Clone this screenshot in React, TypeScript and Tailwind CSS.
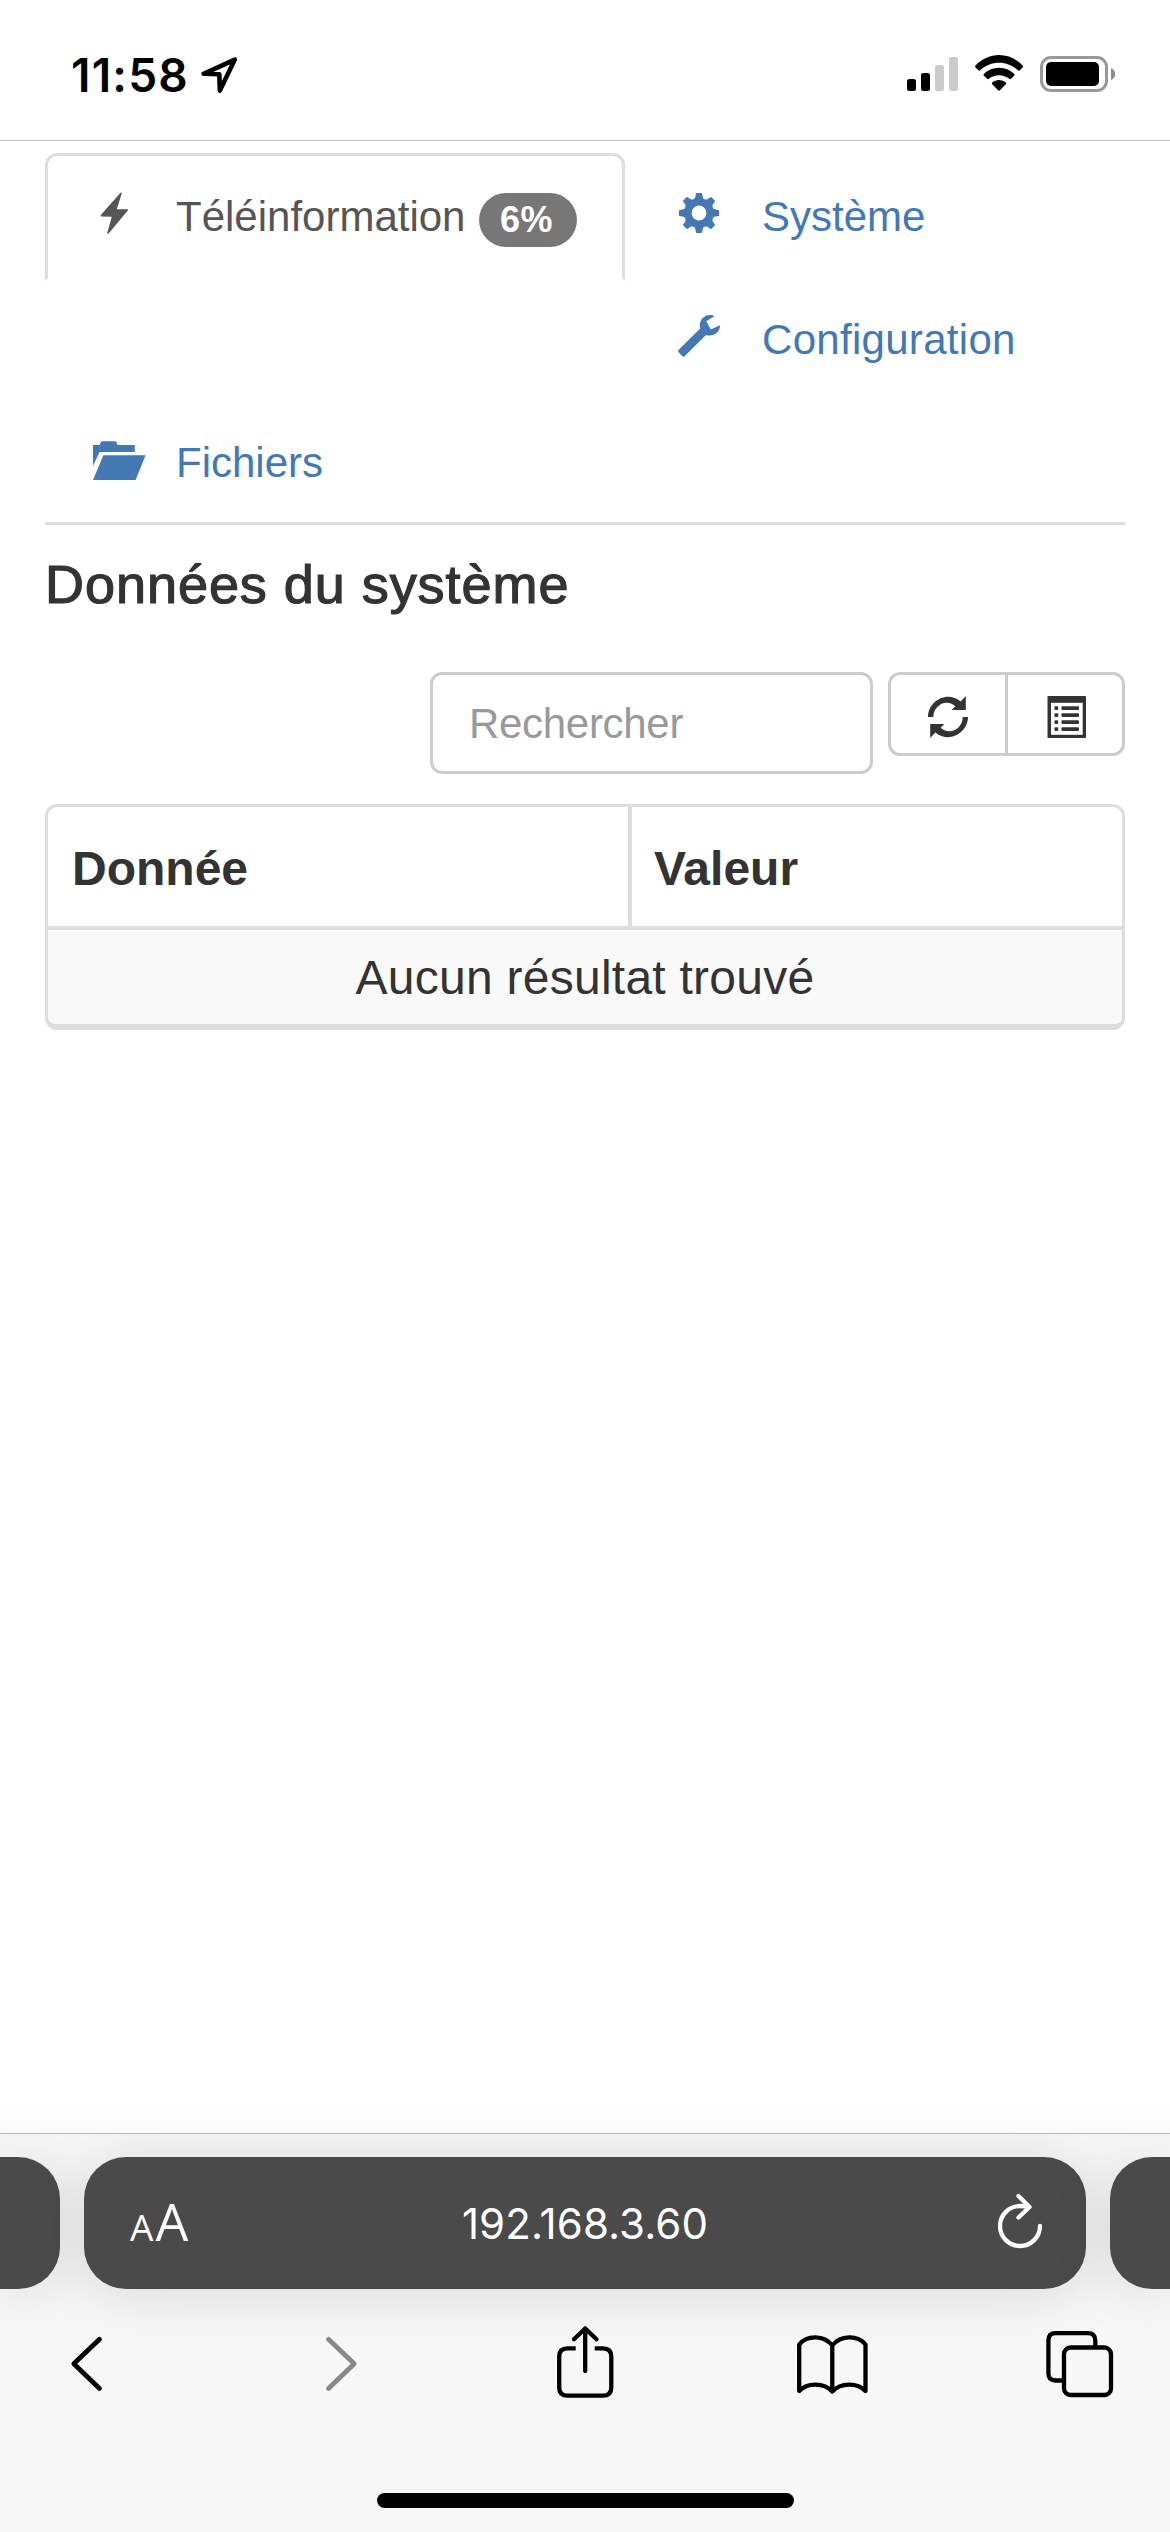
import type { ReactNode } from "react";

interface NavTabProps {
  icon: ReactNode;
  label: string;
  className?: string;
}

const GEAR_TEETH = [0, 45, 90, 135, 180, 225, 270, 315];
const LIST_ROWS = [10.3, 17.3, 24.3, 31.3];
const REFRESH_ARROW =
  "M0 21C0 5.5 19 -6 32.6 5.6L37.8 0V14H23.6L27.4 10.2C18 1.8 5.3 9.5 5.3 21Z";

function BoltIcon() {
  return (
    <path d="M27.3 6.9Q29 6 28.7 7.5L23.8 23.2L34.3 23.2Q35.6 23.4 34.8 24.6L15.6 47.4Q14 48.6 14.3 46.8L18.8 30.8L8.4 30.4Q7.2 30 8 28.8Z" />
  );
}

function GearIcon() {
  return (
    <g transform="translate(20 27)">
      <circle r="11.1" fill="none" stroke="currentColor" strokeWidth="7.4" />
      {GEAR_TEETH.map((angle) => (
        <path
          key={angle}
          d="M-2.4 -20H2.4Q3 -20 3.1 -19.3L3.8 -15.5L5.5 -13H-5.5L-3.8 -15.5L-3.1 -19.3Q-3 -20 -2.4 -20Z"
          transform={`rotate(${angle})`}
        />
      ))}
    </g>
  );
}

function WrenchIcon() {
  return (
    <path d="M-0.4 43.2Q-1.4 42 -0.3 40.8L21.2 19.6C19.2 12.4 24 6 31.5 6Q34 6.1 35.4 7.2L27.3 12.3L31.8 20.4L41 16.3C41.4 23 34 28.4 27 26L5.6 47.2Q4.4 48.3 3.2 47.1Z" />
  );
}

function FolderIcon() {
  return (
    <>
      <path d="M0 13H6.8L7.6 10.5Q8 9.3 9.3 9.3H22Q23.2 9.3 23.6 10.5L24.4 13H41.8V20H6.6L0 34Z" />
      <path d="M10.4 23.3H52.6L42.6 48H0Z" />
    </>
  );
}

function NavTab({ icon, label, className = "" }: NavTabProps) {
  return (
    <a className={`flex items-start pl-[48px] pt-[33px] text-[#4478b5] ${className}`}>
      <svg
        className="w-[83px] h-[60px] shrink-0 overflow-visible"
        viewBox="0 0 83 60"
        fill="currentColor"
      >
        {icon}
      </svg>
      <span className="mt-px">{label}</span>
    </a>
  );
}

function StatusBar() {
  return (
    <header className="flex h-[141px] shrink-0 items-start border-b border-[#bfbfbf] pl-[71px] pr-[54px] pt-[55px]">
      <span className="w-[130px] font-['Inter'] text-[46px] leading-[40px] font-semibold tracking-[1.2px] text-black">
        11:58
      </span>
      <svg
        className="mt-[2px] w-[37px] h-[37px]"
        viewBox="0 0 37 37"
        fill="none"
        stroke="#000"
        strokeWidth="4.6"
        strokeLinejoin="round"
      >
        <path d="M2.6 16.8L33.8 2.6L18.9 33.6L18.3 17.2Z" />
      </svg>
      <svg className="ml-auto w-[209px] h-[38px]" viewBox="907 55 209 38">
        {/* Signal */}
        <rect x="907" y="79" width="9" height="12" rx="2.5" />
        <rect x="921" y="73" width="9" height="18" rx="2.5" />
        <rect x="935" y="65" width="9" height="26" rx="2.5" fill="#cbcbcb" />
        <rect x="949" y="57" width="9" height="34" rx="2.5" fill="#cbcbcb" />
        {/* Wifi */}
        <g transform="translate(975 55)">
          <path d="M0.5 10.6C13.5 -3.5 34.5 -3.5 47.7 10.6Q48.6 11.5 47.8 12.3L44.5 15.4Q43.7 16 42.9 15.3C32.5 5.2 15.5 5.2 5.2 15.3Q4.4 16 3.6 15.4L0.4 12.3Q-0.4 11.5 0.5 10.6Z" />
          <path d="M8.8 19C17 10.6 31 10.6 39.3 19Q40 19.8 39.3 20.6L36 23.8Q35.2 24.5 34.3 23.8C28.5 18.9 19.5 18.9 13.8 23.8Q12.9 24.5 12.1 23.8L8.8 20.6Q8.1 19.8 8.8 19Z" />
          <path d="M17.2 27.6C21 24.2 27 24.2 30.8 27.6Q31.6 28.5 30.8 29.3L24.9 35.3Q24 36.1 23.1 35.3L17.2 29.3Q16.4 28.5 17.2 27.6Z" />
        </g>
        {/* Battery */}
        <rect x="1041.5" y="57.5" width="65" height="33" rx="9.5" fill="none" stroke="#999" strokeWidth="3" />
        <rect x="1046" y="62" width="53" height="24" rx="5" />
        <path d="M1111 68Q1115.2 70 1115.2 74Q1115.2 78 1111 80Z" fill="#8c8c8c" />
      </svg>
    </header>
  );
}

function NavTabs() {
  return (
    <nav className="mt-[12px] grid h-[372px] grid-cols-[586px_1fr] grid-rows-3 border-b-[3px] border-[#ddd] text-[42px] leading-[60px]">
      <a className="flex h-[128px] w-[580px] items-start rounded-t-[12px] border-[3px] border-[#ddd] border-b-transparent pl-[45px] pt-[30px] text-[#555]">
        <svg className="w-[83px] h-[60px] shrink-0" viewBox="0 0 83 60" fill="currentColor">
          <BoltIcon />
        </svg>
        <span className="mt-px">Téléinformation</span>
        <span className="ml-[14px] mt-[7px] flex h-[54px] w-[98px] items-center justify-center rounded-[27px] bg-[#777] pr-[4px] text-[36px] leading-[36px] font-bold tracking-[0.4px] text-white">
          6%
        </span>
      </a>
      <NavTab icon={<GearIcon />} label="Système" />
      <NavTab
        icon={<WrenchIcon />}
        label="Configuration"
        className="col-start-2 tracking-[0.3px]"
      />
      <NavTab icon={<FolderIcon />} label="Fichiers" className="col-start-1" />
    </nav>
  );
}

function Toolbar() {
  return (
    <div className="mt-[58px] flex items-start justify-end">
      <input
        type="text"
        placeholder="Rechercher"
        className="h-[102px] w-[443px] rounded-[12px] border-[3px] border-[#ccc] bg-white px-[36px] pt-[2px] text-[42px] tracking-[-0.3px] placeholder:text-[#999]"
      />
      <div className="ml-[15px] flex h-[84px] w-[237px] rounded-[12px] border-[3px] border-[#ccc] text-[#333]">
        <button type="button" className="w-[117px] border-r-[3px] border-[#ccc] pl-[37px] pt-[6px]">
          <svg className="w-[40px] h-[42px]" viewBox="0 0 40 42" fill="currentColor">
            <path d={REFRESH_ARROW} />
            <path d={REFRESH_ARROW} transform="rotate(180 20 21)" />
          </svg>
        </button>
        <button type="button" className="pl-[39px] pt-[6px]">
          <svg className="w-[39px] h-[42px]" viewBox="0 0 39 42" fill="currentColor">
            <rect x="0.5" width="38.5" height="42" rx="1" />
            <rect x="4" y="6.8" width="31.7" height="32" fill="#fff" />
            {LIST_ROWS.map((y) => (
              <g key={y}>
                <rect x="7.5" y={y} width="3.7" height="3.7" rx="1" />
                <rect x="14.5" y={y} width="17.5" height="3.7" rx="1" />
              </g>
            ))}
          </svg>
        </button>
      </div>
    </div>
  );
}

function DataTable() {
  return (
    <div className="mt-[30px] h-[226px] overflow-hidden rounded-[12px] border-[3px] border-b-[6px] border-[#ddd] text-[48px] leading-[69px]">
      <div className="flex h-[123px] border-b-[4px] border-[#ddd] font-bold">
        <div className="w-[584px] border-r-[4px] border-[#ddd] pl-[24px] pt-[27px]">Donnée</div>
        <div className="pl-[22px] pt-[27px]">Valeur</div>
      </div>
      <div className="h-[94px] bg-[#f9f9f9] pt-[13px] text-center tracking-[0.25px]">
        Aucun résultat trouvé
      </div>
    </div>
  );
}

function BrowserBar() {
  return (
    <footer className="h-[399px] shrink-0 overflow-hidden border-t border-[#b8b8b8] bg-[#f7f7f7]">
      {/* Address bar, with the neighbouring tabs on both sides */}
      <div className="mt-[23px] flex h-[132px] gap-[24px] text-white">
        <div className="w-[60px] rounded-r-[42px] bg-[#4a4a4a] shadow-[0_4px_60px_rgba(0,0,0,0.13)]" />
        <div className="flex w-[1002px] items-center rounded-[42px] bg-[#4a4a4a] pl-[46px] pr-[43px] shadow-[0_4px_60px_rgba(0,0,0,0.13)]">
          <div className="mb-[4px] flex w-[60px] items-baseline gap-[2px] font-['Open_Sans']">
            <span className="text-[37px] font-medium">A</span>
            <span className="text-[52px]">A</span>
          </div>
          <span className="flex-1 pr-[15px] text-center font-['Inter'] text-[42px] tracking-[0.1px]">
            192.168.3.60
          </span>
          <svg
            className="w-[48px] h-[60px]"
            viewBox="995 2193 48 60"
            fill="none"
            stroke="#fff"
            strokeWidth="4.3"
            strokeLinecap="round"
            strokeLinejoin="round"
          >
            <path d="M1040 2226A20 20 0 1 1 1020 2206Q1025 2206 1029 2207" />
            <path d="M1018.5 2196L1029.5 2207L1018.5 2217.5" />
          </svg>
        </div>
        <div className="w-[60px] rounded-l-[42px] bg-[#4a4a4a] shadow-[0_4px_60px_rgba(0,0,0,0.13)]" />
      </div>

      <div className="mt-[39px] flex justify-between pl-[50px] pr-[56px] text-black">
        <svg className="w-[72px] h-[72px]" viewBox="0 0 72 72" fill="none" stroke="currentColor" strokeWidth="4.8" strokeLinecap="round" strokeLinejoin="round">
          <path d="M49.5 11.3L23.8 35.8L49.5 60.4" />
        </svg>
        <svg className="w-[72px] h-[72px]" viewBox="0 0 72 72" fill="none" stroke="#888" strokeWidth="4.8" strokeLinecap="round" strokeLinejoin="round">
          <path d="M30.5 11.3L56.2 35.8L30.5 60.4" />
        </svg>
        <svg className="w-[72px] h-[72px] overflow-visible" viewBox="0 0 72 72" fill="none" stroke="currentColor" strokeWidth="4.3">
          <path d="M29.7 20.3H21.5Q13.2 20.3 13.2 28.5V59.5Q13.2 67.7 21.5 67.7H57Q65.3 67.7 65.3 59.5V28.5Q65.3 20.3 57 20.3H48.7" />
          <path d="M39.2 43V0.5M28 11.2L39.2 0.5L50.5 11.2" strokeLinecap="round" strokeLinejoin="round" />
        </svg>
        <svg className="w-[72px] h-[72px] overflow-visible" viewBox="0 0 72 72" fill="none" stroke="currentColor" strokeWidth="4.3" strokeLinecap="round" strokeLinejoin="round">
          <path d="M38.3 17.5C30 6.8 13 6.8 5.2 16.5V63C13 54.3 30 54.3 38.3 63.5C46.6 54.3 63.6 54.3 71.5 63V16.5C63.6 6.8 46.6 6.8 38.3 17.5V63.5" />
        </svg>
        <svg className="w-[72px] h-[72px]" viewBox="0 0 72 72" fill="none" stroke="currentColor" strokeWidth="4.3">
          <path d="M53.3 19.5V12.5Q53.3 5.2 46 5.2H13.7Q6.4 5.2 6.4 12.5V45.2Q6.4 52.5 13.7 52.5H22" />
          <rect x="22" y="19.5" width="47" height="47.5" rx="6.5" />
        </svg>
      </div>

      <div className="mx-auto mt-[93px] h-[15px] w-[417px] rounded-full bg-black" />
    </footer>
  );
}

export default function App() {
  return (
    <div className="flex h-[2532px] w-[1170px] flex-col overflow-hidden bg-white font-['Liberation_Sans',sans-serif] text-[#333]">
      <StatusBar />
      <main className="flex-1 px-[45px]">
        <NavTabs />
        <h3 className="mt-[29px] text-[54px] leading-[60px] font-normal tracking-[0.95px] [-webkit-text-stroke:1.2px_#333]">
          Données du système
        </h3>
        <Toolbar />
        <DataTable />
      </main>
      <div className="h-[30px] shrink-0 bg-linear-to-b from-white to-[#fafafa]" />
      <BrowserBar />
    </div>
  );
}
